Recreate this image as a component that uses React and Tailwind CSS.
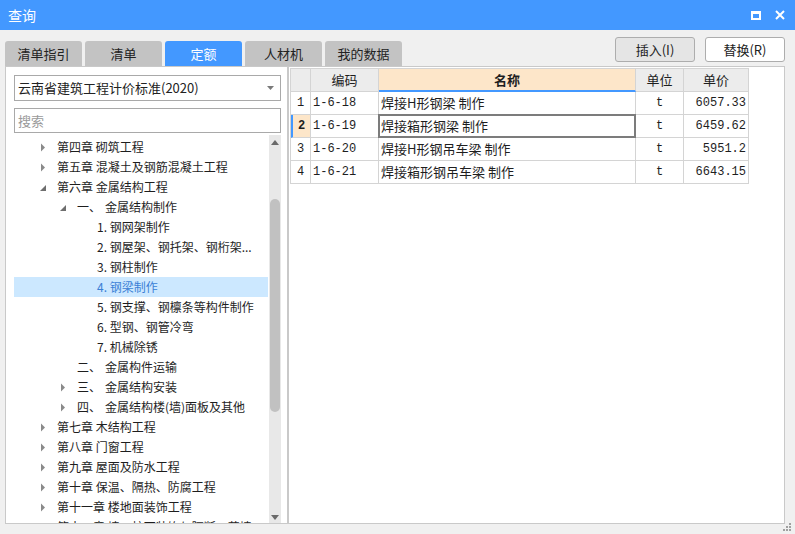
import React from 'react';

const FONT = { fontFamily: '"Microsoft YaHei", "Noto Sans CJK SC", sans-serif' };
const MONO = { fontFamily: '"SimSun", "Liberation Mono", "Noto Sans CJK SC", monospace' };

const TABS = ['清单指引', '清单', '定额', '人材机', '我的数据'];

// level: 缩进层级, arrow: 'right' | 'down' | null
const TREE = [
  { level: 0, arrow: 'right', text: '第四章 砌筑工程' },
  { level: 0, arrow: 'right', text: '第五章 混凝土及钢筋混凝土工程' },
  { level: 0, arrow: 'down', text: '第六章 金属结构工程' },
  { level: 1, arrow: 'down', num: '一、', text: '金属结构制作' },
  { level: 2, text: '1. 钢网架制作' },
  { level: 2, text: '2. 钢屋架、钢托架、钢桁架...' },
  { level: 2, text: '3. 钢柱制作' },
  { level: 2, text: '4. 钢梁制作', active: true },
  { level: 2, text: '5. 钢支撑、钢檩条等构件制作' },
  { level: 2, text: '6. 型钢、钢管冷弯' },
  { level: 2, text: '7. 机械除锈' },
  { level: 1, num: '二、', text: '金属构件运输' },
  { level: 1, arrow: 'right', num: '三、', text: '金属结构安装' },
  { level: 1, arrow: 'right', num: '四、', text: '金属结构楼(墙)面板及其他' },
  { level: 0, arrow: 'right', text: '第七章 木结构工程' },
  { level: 0, arrow: 'right', text: '第八章 门窗工程' },
  { level: 0, arrow: 'right', text: '第九章 屋面及防水工程' },
  { level: 0, arrow: 'right', text: '第十章 保温、隔热、防腐工程' },
  { level: 0, arrow: 'right', text: '第十一章 楼地面装饰工程' },
  { level: 0, arrow: 'right', text: '第十二章 墙、柱面装饰与隔断、幕墙' },
];

const ROWS = [
  { code: '1-6-18', name: '焊接H形钢梁 制作', unit: 't', price: '6057.33' },
  { code: '1-6-19', name: '焊接箱形钢梁 制作', unit: 't', price: '6459.62', selected: true },
  { code: '1-6-20', name: '焊接H形钢吊车梁 制作', unit: 't', price: '5951.2' },
  { code: '1-6-21', name: '焊接箱形钢吊车梁 制作', unit: 't', price: '6643.15' },
];

const INDENT = ['pl-[23px]', 'pl-[43px]', 'pl-[63px]'];

function Arrow({ dir }) {
  if (dir === 'right') {
    return (
      <svg width="6" height="9" viewBox="0 0 6 9" className="ml-[3px]">
        <path d="M1 0.5 L5 4.5 L1 8.5 Z" fill="#8a8a8a" />
      </svg>
    );
  }
  if (dir === 'down') {
    return (
      <svg width="8" height="8" viewBox="0 0 8 8" className="ml-[2px] mt-[2px]">
        <path d="M7 1 L7 7 L1 7 Z" fill="#6e6e6e" />
      </svg>
    );
  }
  return null;
}

function TreeRow({ item }) {
  return (
    <div
      className={`flex items-center h-[20px] text-[12px] whitespace-nowrap ${INDENT[item.level]} ${
        item.active ? 'bg-[#cce8ff] text-[#3a7fd6]' : 'text-[#1e1e1e]'
      }`}
    >
      <div className="w-[20px] flex items-center shrink-0">
        <Arrow dir={item.arrow} />
      </div>
      {item.num && <span className="w-[28px] shrink-0">{item.num}</span>}
      <span>{item.text}</span>
    </div>
  );
}

function Cell({ className = '', children, style }) {
  return (
    <div className={`flex items-center border-r border-b border-[#d4d4d4] ${className}`} style={style}>
      {children}
    </div>
  );
}

export default function App() {
  return (
    <div className="w-[795px] h-[534px] bg-[#f0f0f0] flex flex-col overflow-hidden relative" style={FONT}>
      {/* 标题栏 */}
      <div className="h-[30px] bg-[#4398ff] flex items-center px-[8px] shrink-0">
        <span className="text-white text-[14px]">查询</span>
        <div className="ml-auto flex items-center gap-[14px] mr-[2px]">
          <div className="w-[10px] h-[9px] border-2 border-t-[3px] border-white" />
          <svg width="10" height="10" viewBox="0 0 10 10">
            <path d="M1 1 L9 9 M9 1 L1 9" stroke="#fff" strokeWidth="2" />
          </svg>
        </div>
      </div>

      {/* 页签 + 按钮 */}
      <div className="h-[36px] flex items-end pl-[5px] pr-[10px] shrink-0">
        <div className="flex gap-[3px]">
          {TABS.map(t => (
            <div
              key={t}
              className={`w-[77px] h-[25px] rounded-t-[3px] flex items-center justify-center text-[13px] ${
                t === '定额' ? 'bg-[#4398ff] text-white' : 'bg-[#c3c3c3] text-[#222]'
              }`}
            >
              {t}
            </div>
          ))}
        </div>
        <div className="ml-auto flex gap-[10px] self-start mt-[7px]">
          <div className="w-[80px] h-[25px] rounded-[3px] border border-[#adadad] bg-[#e5e5e5] flex items-center justify-center text-[13px] text-[#222]">
            插入(I)
          </div>
          <div className="w-[80px] h-[25px] rounded-[3px] border border-[#adadad] bg-white flex items-center justify-center text-[13px] text-[#222]">
            替换(R)
          </div>
        </div>
      </div>

      {/* 主体 */}
      <div className="flex h-[458px] pl-[5px] pr-[10px] shrink-0">
        {/* 左侧 */}
        <div className="w-[283px] border border-[#c9c9c9] bg-white flex flex-col pt-[8px] pl-[8px] pr-[6px]">
          <div className="h-[26px] border border-[#a9a9a9] flex items-center pl-[3px] pr-[6px] text-[13px] text-[#222] shrink-0">
            <span>云南省建筑工程计价标准(2020)</span>
            <svg width="7" height="4" viewBox="0 0 7 4" className="ml-auto">
              <path d="M0 0 L7 0 L3.5 4 Z" fill="#7a7a7a" />
            </svg>
          </div>
          <div className="h-[25px] mt-[7px] border border-[#a9a9a9] flex items-center pl-[3px] text-[13px] text-[#9a9a9a] shrink-0">
            搜索
          </div>
          <div className="flex flex-1 mt-[2px] overflow-hidden">
            <div className="flex-1 pt-[2px] overflow-hidden">
              {TREE.map((item, i) => (
                <TreeRow key={i} item={item} />
              ))}
            </div>
            <div className="w-[12px] ml-[1px] bg-[#e8e8e8] flex flex-col items-center pt-[5px] pb-[3px] shrink-0">
              <svg width="8" height="5" viewBox="0 0 8 5">
                <path d="M0 5 L8 5 L4 0 Z" fill="#6a6a6a" />
              </svg>
              <div className="w-[10px] h-[213px] mt-[54px] rounded-full bg-[#c1c1c1]" />
              <svg width="8" height="5" viewBox="0 0 8 5" className="mt-auto">
                <path d="M0 0 L8 0 L4 5 Z" fill="#6a6a6a" />
              </svg>
            </div>
          </div>
        </div>

        {/* 右侧表格 */}
        <div className="flex-1 border border-[#c9c9c9] bg-white pl-[1px] pt-[1px]">
          <div className="w-[459px] border-l border-t border-[#d4d4d4] text-[#1e1e1e]">
            <div className="flex h-[23px] text-[13px]">
              <Cell className="w-[20px] bg-[#ececec]" />
              <Cell className="w-[68px] bg-[#ececec] justify-center">编码</Cell>
              <Cell className="w-[257px] bg-[#fde6c9] justify-center font-bold border-b-2 border-b-[#4398ff]">名称</Cell>
              <Cell className="w-[48px] bg-[#ececec] justify-center">单位</Cell>
              <Cell className="w-[65px] bg-[#ececec] justify-center">单价</Cell>
            </div>
            {ROWS.map((r, i) => (
              <div key={r.code} className="flex h-[23px]">
                <Cell
                  className={`w-[20px] justify-center text-[12px] ${
                    r.selected ? 'bg-[#fde6c9] font-bold border-l-2 border-l-[#4398ff]' : ''
                  }`}
                  style={MONO}
                >
                  {i + 1}
                </Cell>
                <Cell className="w-[68px] pl-[2px] text-[12px]" style={MONO}>{r.code}</Cell>
                <Cell className="w-[257px] text-[13px] relative">
                  <span className="pl-[2px]">{r.name}</span>
                  {r.selected && (
                    <div className="absolute -left-[1px] -top-[1px] w-[258px] h-[24px] border-2 border-[#7c7c7c]" />
                  )}
                </Cell>
                <Cell className="w-[48px] justify-center text-[12px]" style={MONO}>{r.unit}</Cell>
                <Cell className="w-[65px] justify-end pr-[2px] text-[12px]" style={MONO}>{r.price}</Cell>
              </div>
            ))}
          </div>
        </div>
      </div>

      {/* 右下角拖拽 */}
      <svg width="9" height="9" viewBox="0 0 9 9" className="absolute right-[3px] bottom-[2px]">
        <rect x="6" y="0" width="2" height="2" fill="#a0a0a0" />
        <rect x="3" y="3" width="2" height="2" fill="#a0a0a0" />
        <rect x="6" y="3" width="2" height="2" fill="#a0a0a0" />
        <rect x="0" y="6" width="2" height="2" fill="#a0a0a0" />
        <rect x="3" y="6" width="2" height="2" fill="#a0a0a0" />
        <rect x="6" y="6" width="2" height="2" fill="#a0a0a0" />
      </svg>
    </div>
  );
}
